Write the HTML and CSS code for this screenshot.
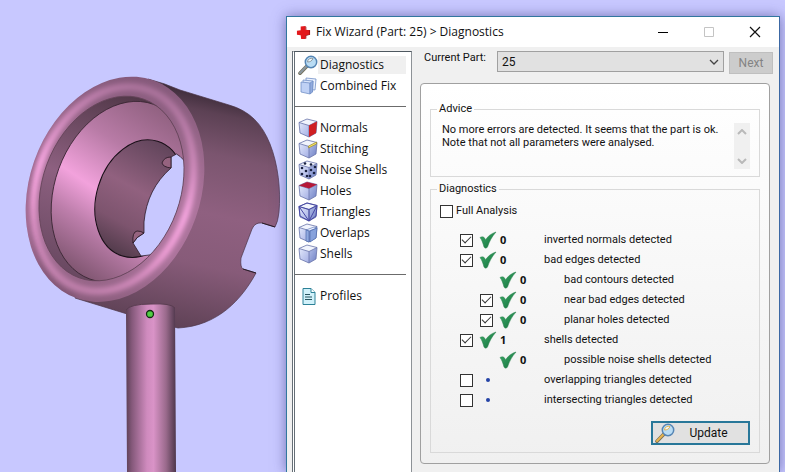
FILE: index.html
```html
<!DOCTYPE html>
<html lang="en">
<head>
<meta charset="utf-8">
<title>Fix Wizard (Part: 25) &gt; Diagnostics</title>
<link rel="stylesheet" href="styles.css">
</head>
<body>
<svg class="defs" aria-hidden="true">
  <defs>
    <linearGradient id="face-l" x1="0" y1="0" x2="1" y2="1"><stop offset="0" stop-color="#e2e8fb"/><stop offset="1" stop-color="#a3aee4"/></linearGradient>
    <linearGradient id="face-r" x1="0" y1="0" x2="1" y2="1"><stop offset="0" stop-color="#b3bfe9"/><stop offset="1" stop-color="#6f80c4"/></linearGradient>
    <linearGradient id="check-g" x1="0" y1="0" x2="1" y2="1"><stop offset="0" stop-color="#3fa96a"/><stop offset="1" stop-color="#11713a"/></linearGradient>
    <symbol id="cube" viewBox="0 0 20 20">
      <path d="M1 4.500 9 1l10 2.500-8 4z" fill="#f1f4fd"/>
      <path d="M1 4.500 11 7.500V19L2 15z" fill="url(#face-l)"/>
      <path d="M11 7.500 19 3.500 18 15l-7 4z" fill="url(#face-r)"/>
      <path d="M1 4.500 9 1l10 2.500L18 15l-7 4-9-4zM1 4.500l10 3 8-4M11 7.500V19" fill="none" stroke="#6772a8" stroke-width=".8" stroke-linejoin="round"/>
    </symbol>
    <symbol id="check" viewBox="0 0 18 18">
      <path d="M1 6.500c2.500-1.300 4.500-.8 5.500 2.500C8.500 5.500 12 2.500 17 1 13 5.500 10.500 10 8.500 16c-.8 1.500-2.800 1.500-3.500 0C4 12.500 3 9 1 6.500z" fill="url(#check-g)" stroke="#28814d" stroke-width=".5"/>
    </symbol>
    <symbol id="lens" viewBox="0 0 20 20">
      <path d="M2 18.300 9 11" stroke="#75715c" stroke-width="3.600" stroke-linecap="round"/>
      <path d="M2 18 9 10.800" class="handle" stroke-width="2" stroke-linecap="round"/>
      <circle cx="13" cy="7" r="5.700" fill="#b9dcf4" stroke="#5585b4" stroke-width="1.500"/>
      <path d="M9.500 7A4 4 0 0 1 15 3.500C14 6 12 7 9.500 7z" fill="#eff9ff"/>
    </symbol>
  </defs>
</svg>

<div class="desktop">
  <svg class="scene" viewBox="0 0 286 472" preserveAspectRatio="xMinYMin meet" role="img" aria-label="3D view of the part">
    <defs>
      <linearGradient id="body-g" gradientUnits="userSpaceOnUse" x1="215" y1="94" x2="165" y2="325">
        <stop offset="0" stop-color="#3c2b39"/><stop offset=".08" stop-color="#5c4154"/><stop offset=".25" stop-color="#7b556f"/><stop offset=".5" stop-color="#8f6080"/><stop offset=".72" stop-color="#875b79"/><stop offset="1" stop-color="#5f4256"/>
      </linearGradient>
      <linearGradient id="ring-g" gradientUnits="userSpaceOnUse" x1="140" y1="76" x2="95" y2="302">
        <stop offset="0" stop-color="#85597a"/><stop offset=".25" stop-color="#98678a"/><stop offset=".5" stop-color="#ac749c"/><stop offset=".75" stop-color="#ac749c"/><stop offset="1" stop-color="#8c5e7e"/>
      </linearGradient>
      <linearGradient id="shine-g" gradientUnits="userSpaceOnUse" x1="120" y1="78" x2="115" y2="300">
        <stop offset="0" stop-color="#a87199"/><stop offset=".28" stop-color="#d18bbd"/><stop offset=".5" stop-color="#f9a8e3"/><stop offset=".68" stop-color="#f09fd7"/><stop offset=".84" stop-color="#d38bbd"/><stop offset="1" stop-color="#bd7ea9"/>
      </linearGradient>
      <linearGradient id="cone-g" gradientUnits="userSpaceOnUse" x1="140" y1="100" x2="95" y2="280">
        <stop offset="0" stop-color="#8f607f"/><stop offset=".3" stop-color="#b87ba6"/><stop offset=".57" stop-color="#f2a2dc"/><stop offset=".75" stop-color="#bd7eab"/><stop offset="1" stop-color="#805671"/>
      </linearGradient>
      <linearGradient id="bore-g" gradientUnits="userSpaceOnUse" x1="155" y1="140" x2="130" y2="258">
        <stop offset="0" stop-color="#60445a"/><stop offset=".45" stop-color="#91617f"/><stop offset=".75" stop-color="#7d546e"/><stop offset="1" stop-color="#523b4b"/>
      </linearGradient>
      <linearGradient id="wall-g" gradientUnits="userSpaceOnUse" x1="140" y1="95" x2="80" y2="280">
        <stop offset="0" stop-color="#503747"/><stop offset=".5" stop-color="#8d6080"/><stop offset="1" stop-color="#684860"/>
      </linearGradient>
      <linearGradient id="stem-g">
        <stop offset="0" stop-color="#5c4055"/><stop offset=".12" stop-color="#85597b"/><stop offset=".42" stop-color="#cf8bbe"/><stop offset=".55" stop-color="#d993c7"/><stop offset=".8" stop-color="#9a6a8c"/><stop offset="1" stop-color="#4d364a"/>
      </linearGradient>
      <filter id="soft" x="-20%" y="-20%" width="140%" height="140%"><feGaussianBlur stdDeviation="2.500"/></filter>
      <clipPath id="opening"><ellipse cx="111.500" cy="188.500" rx="69" ry="95" transform="rotate(20 111.500 188.500)"/></clipPath>
      <clipPath id="rim"><ellipse cx="115" cy="189.300" rx="85.600" ry="115.500" transform="rotate(19.300 115 189.300)"/></clipPath>
    </defs>
    <path d="M148 79Q164 83 180 90L229 105C250 111 262 124 270 144C278 164 281 190 279 212Q278 222 275 227L262 223Q255 222 252 229L241 258Q240 267 243 269L256 273C242 299 218 326 178 328L150 321L75 298z" fill="url(#body-g)" stroke="#4a3446" stroke-width=".7"/>
    <path d="m243 269 13 4M262 223l13 4" stroke="#281b27"/>
    <g clip-path="url(#rim)">
      <path d="M20 70h195v240H20z" fill="url(#ring-g)"/>
      <ellipse cx="113" cy="189" rx="77" ry="105" transform="rotate(19.500 113 189)" fill="none" stroke="url(#shine-g)" stroke-width="7" filter="url(#soft)"/>
      <path d="M49 119C30 152 24 195 30 232C38 272 57 291 75 298" fill="none" stroke="#59394f" stroke-width="3" opacity=".45" filter="url(#soft)"/>
    </g>
    <g clip-path="url(#opening)">
      <path d="M30 80h170v220H30z" fill="url(#wall-g)"/>
      <ellipse cx="121.700" cy="191.700" rx="67" ry="93" transform="rotate(20 121.700 191.700)" fill="url(#cone-g)" stroke="#382532" stroke-width=".8"/>
      <ellipse cx="140" cy="198.700" rx="43.500" ry="60" transform="rotate(17 140 198.700)" fill="url(#bore-g)" stroke="#170e16"/>
      <path d="M176.500 154Q184 158 190 170V230L156 252Q150 256 141 256L133 243Q136 237 144 233V222C146 200 155 182 171 168V157z" fill="#c8c8ff" stroke="#2d1d2a" stroke-width=".8"/>
      <path d="M171 157Q164 157 162 163Q163 167 171 168z" fill="#96637f" stroke="#23151f" stroke-width=".8"/>
      <path d="M133 243Q132 232 137 231Q141 231 144 233Q136 237 133 243z" fill="#96637f" stroke="#23151f" stroke-width=".8"/>
    </g>
    <ellipse cx="111.500" cy="188.500" rx="69" ry="95" transform="rotate(20 111.500 188.500)" fill="none" stroke="#644459" stroke-width=".8"/>
    <path d="M126 310Q130 304 151 304Q171 303 175 308L176 472H127z" fill="url(#stem-g)"/>
    <path d="M126 310Q130 304 151 304Q171 303 175 308" fill="none" stroke="#5a3d51"/>
    <circle cx="150" cy="314" r="3.500" fill="#4fce43" stroke="#102b10" stroke-width="1.300"/>
  </svg>

  <main class="window">
    <header class="titlebar">
      <svg class="app-icon" viewBox="0 0 16 16" aria-hidden="true"><path d="M5 1.500 10 1v4l5 .5-.5 5-4 .5-.5 4H5.500L5 11l-4-.5V6l4-.5z" fill="#e3191c"/><path d="m10 1 1 1v3.500l4 0v5l-4 1v3l-1 .5v-4l4-1V6l-4-1z" fill="#9c080b"/></svg>
      <h1>Fix Wizard (Part: 25) &gt; Diagnostics</h1>
      <button class="win-btn" aria-label="Minimize"><svg viewBox="0 0 12 12"><path d="M1 6.500h10" stroke="#000"/></svg></button>
      <button class="win-btn" aria-label="Maximize" disabled><svg viewBox="0 0 12 12"><path d="M1.500 1.500h9v9h-9z" fill="none" stroke="#c4c4c4"/></svg></button>
      <button class="win-btn" aria-label="Close"><svg viewBox="0 0 12 12"><path d="m1 1 10 10M11 1 1 11" stroke="#111" stroke-width="1.200"/></svg></button>
    </header>
    <div class="client">
      <nav class="sidebar" aria-label="Pages">
        <a class="item current" href="#diagnostics"><svg class="blue"><use href="#lens"/></svg><span>Diagnostics</span></a>
        <a class="item" href="#combined"><svg viewBox="0 0 20 20"><g stroke="#7290c6" stroke-width=".8"><path d="m8 2 10 1-1 11-9-1z" fill="#eaf1fe"/><path d="m5 4 10 1-.5 11L5 15z" fill="#d8e4fb"/><path d="m3 6 9 1v11l-9-2z" fill="#bfd1f5"/><path d="m12 7 3-2-.5 11-2.500 2z" fill="#91abde"/></g></svg><span>Combined Fix</span></a>
        <hr>
        <a class="item" href="#normals"><svg viewBox="0 0 20 20"><use href="#cube"/><path d="m11 7.500 8-4L18 15l-7 4z" fill="#cf1f23"/></svg><span>Normals</span></a>
        <a class="item" href="#stitching"><svg viewBox="0 0 20 20"><use href="#cube"/><path d="M10.500 9V7l8-4v2z" fill="#f4e25d" stroke="#92802b" stroke-width=".6"/></svg><span>Stitching</span></a>
        <a class="item" href="#noise"><svg viewBox="0 0 20 20"><use href="#cube"/><g fill="#182040"><circle cx="7" cy="3.500" r="1.300"/><circle cx="13" cy="4.500" r="1.300"/><circle cx="4" cy="8" r="1.300"/><circle cx="8" cy="11" r="1.300"/><circle cx="4" cy="14" r="1.300"/><circle cx="9" cy="16" r="1.300"/><circle cx="13" cy="10" r="1.300"/><circle cx="17" cy="7" r="1.300"/><circle cx="16" cy="13" r="1.300"/><circle cx="12" cy="16" r="1.300"/></g></svg><span>Noise Shells</span></a>
        <a class="item" href="#holes"><svg viewBox="0 0 20 20"><use href="#cube"/><path d="M1 4.500 9 1l10 2.500-8 4z" fill="#b51838"/></svg><span>Holes</span></a>
        <a class="item" href="#triangles"><svg viewBox="0 0 20 20"><use href="#cube"/><path d="M1 4.500 9 1l10 2.500L18 14l-7 5-9-5zM1 4.500l10 3 8-4M11 7.500V19M1 4.500 11 19l8-15.500" fill="none" stroke="#4748a4"/></svg><span>Triangles</span></a>
        <a class="item" href="#overlaps"><svg viewBox="0 0 20 20"><use href="#cube"/><path d="m8 7 8-3 3 1-8 3z" fill="#edf2ff" stroke="#657ebc" stroke-width=".7"/><path d="m8 7 3 1v11l-3-1z" fill="#91a9df" stroke="#4e6cae" stroke-width=".7"/><path d="m12 8 7-3-1 10-6 4z" fill="#86a1dc" stroke="#4e6cae" stroke-width=".7"/></svg><span>Overlaps</span></a>
        <a class="item" href="#shells"><svg><use href="#cube"/></svg><span>Shells</span></a>
        <hr>
        <a class="item" href="#profiles"><svg viewBox="0 0 20 20"><path d="M5 2.500h8l4 4v12H5z" fill="#d1f1fa" stroke="#2c8197"/><path d="M13 2.500v4h4" fill="#fff" stroke="#2c8197"/><path d="M7 8.500h5M7 11h7M7 13.500h7" stroke="#27545f"/></svg><span>Profiles</span></a>
      </nav>

      <div class="content">
        <div class="part-row">
          <label for="part">Current Part:</label>
          <select id="part"><option>25</option></select>
          <button class="next" disabled>Next</button>
        </div>
        <section class="panel" id="diagnostics">
          <fieldset class="advice">
            <legend>Advice</legend>
            <p>No more errors are detected. It seems that the part is ok.<br>Note that not all parameters were analysed.</p>
            <div class="scroller">
              <button aria-label="Scroll up" disabled><svg viewBox="0 0 10 6"><path d="m1 5 4-4 4 4"/></svg></button>
              <button aria-label="Scroll down" disabled><svg viewBox="0 0 10 6"><path d="m1 1 4 4 4-4"/></svg></button>
            </div>
          </fieldset>
          <fieldset class="results">
            <legend>Diagnostics</legend>
            <label class="full"><input type="checkbox"><span>Full Analysis</span></label>
            <div class="rows">
              <label class="row"><input type="checkbox" checked><svg><use href="#check"/></svg><b>0</b><span>inverted normals detected</span></label>
              <label class="row"><input type="checkbox" checked><svg><use href="#check"/></svg><b>0</b><span>bad edges detected</span></label>
              <div class="row sub"><i></i><svg><use href="#check"/></svg><b>0</b><span>bad contours detected</span></div>
              <label class="row sub"><input type="checkbox" checked><svg><use href="#check"/></svg><b>0</b><span>near bad edges detected</span></label>
              <label class="row sub"><input type="checkbox" checked><svg><use href="#check"/></svg><b>0</b><span>planar holes detected</span></label>
              <label class="row"><input type="checkbox" checked><svg><use href="#check"/></svg><b>1</b><span>shells detected</span></label>
              <div class="row sub"><i></i><svg><use href="#check"/></svg><b>0</b><span>possible noise shells detected</span></div>
              <label class="row"><input type="checkbox"><svg viewBox="0 0 18 18"><circle cx="9" cy="9" r="2" fill="#2443a6"/></svg><b></b><span>overlapping triangles detected</span></label>
              <label class="row"><input type="checkbox"><svg viewBox="0 0 18 18"><circle cx="9" cy="9" r="2" fill="#2443a6"/></svg><b></b><span>intersecting triangles detected</span></label>
            </div>
            <button class="update"><svg class="gold"><use href="#lens"/></svg><span>Update</span></button>
          </fieldset>
        </section>
      </div>
    </div>
  </main>
</div>
</body>
</html>
```

FILE: styles.css
```css
* { box-sizing: border-box; }

body {
  margin: 0;
  background: #c8c8ff;
  color: #111;
  font: 11px/14px Roboto, "Liberation Sans", sans-serif;
}

button, select, input { margin: 0; font: inherit; color: inherit; }
.defs { position: absolute; width: 0; height: 0; }

.desktop { display: flex; height: 100vh; overflow: hidden; }
.scene { flex: 0 0 286px; align-self: flex-start; }

.window {
  display: flex;
  flex-direction: column;
  flex: 1;
  margin: 16px 5px 0 0;
  border: 1px solid #31779f;
  border-right-color: #3c68a4;
  border-bottom: 0;
  background: #f0f0f0;
  box-shadow: 0 0 12px rgba(60, 60, 130, 0.6);
}

.titlebar { display: flex; align-items: center; height: 30px; background: #fff; padding: 0 1px 0 9px; }
.app-icon { width: 15px; height: 15px; }
.titlebar h1 { flex: 1; margin: 0 0 0 5px; font: 12px/16px "Open Sans", "Noto Sans", sans-serif; white-space: nowrap; }
.win-btn { display: grid; place-items: center; width: 46px; height: 28px; padding: 0; border: 0; background: none; }
.win-btn svg { width: 12px; height: 12px; }

.client { display: flex; flex: 1; gap: 8px; padding: 4px 6px 0 5px; }

.sidebar {
  flex: 0 0 120px;
  padding: 2px 5px 0 0;
  border: 1px solid #4e5860;
  border-right-color: #8d9297;
  border-bottom: 0;
  border-left: 3px double #656e76;
  background: #fff;
  font: 12px/18px "Open Sans", "Noto Sans", sans-serif;
}
.item { display: flex; align-items: center; height: 21px; padding-left: 3px; color: inherit; text-decoration: none; white-space: nowrap; }
.item svg { width: 20px; height: 20px; flex: none; }
.item span { flex: 1; padding-left: 2px; }
.current span { background: #f0f0f0; }
.blue { stroke: #8c98a0; }
.gold { stroke: #e9b44d; }
.sidebar hr { height: 1px; margin: 10px 0; border: 0; background: #6b6b6b; }

.content { flex: 1; min-width: 0; }
.part-row { display: flex; align-items: flex-start; gap: 5px; padding-left: 4px; }
.part-row label { width: 68px; white-space: nowrap; }
.part-row select {
  flex: 1;
  height: 21px;
  padding: 0 4px;
  border: 1px solid #a0a0a0;
  border-radius: 0;
  appearance: none;
  background: #e1e1e1 url("data:image/svg+xml,%3Csvg xmlns='http://www.w3.org/2000/svg' width='10' height='6'%3E%3Cpath d='m1 1 4 4 4-4' fill='none' stroke='%23444' stroke-width='1.3'/%3E%3C/svg%3E") no-repeat right 4px center;
  font-size: 12px;
}
.next { width: 44px; height: 22px; margin-top: 1px; padding: 0; border: 1px solid #bfbfbf; background: #ccc; color: #838383; font-size: 12px; }

.panel {
  margin-top: 9px;
  margin-right: 3px;
  padding: 18px 9px 10px;
  border: 1px solid #a0a0a0;
  border-radius: 4px;
  background: linear-gradient(#fff, #f0f0f0);
}
fieldset { display: flow-root; min-width: 0; margin: 0; padding: 0 9px; border: 1px solid #d9d9d9; }
legend { margin-left: -3px; padding: 0 2px; }
.advice { height: 75px; }
.results { height: 271px; margin-top: 5px; }
.advice p { float: left; margin: 7px 0 0 2px; line-height: 13px; }
.scroller { display: flex; flex-direction: column; justify-content: space-between; float: right; width: 16px; height: 46px; margin-top: 7px; background: #f0f0f0; }
.scroller button { display: grid; place-items: center; height: 17px; padding: 0; border: 0; background: none; }
.scroller svg { width: 10px; height: 6px; fill: none; stroke: #b9b9b9; stroke-width: 2; }

input[type="checkbox"] { display: grid; place-items: center; appearance: none; width: 13px; height: 13px; border: 1px solid #333; background: #fff; }
input[type="checkbox"]:checked::before { content: ""; width: 8px; height: 4px; margin-bottom: 3px; border: solid #333; border-width: 0 0 1px 1px; transform: rotate(-45deg); }

.full { display: flex; align-items: center; gap: 3px; height: 20px; margin-top: 5px; }
.rows { padding: 9px 0 0 20px; }
.row { display: grid; grid-template-columns: 19px 18px 44px 1fr; align-items: center; height: 20px; }
.row svg { width: 18px; height: 18px; }
.row b { padding-left: 3px; font: bold 11px/14px "Open Sans", "Noto Sans", sans-serif; }
.row span { padding-left: 3px; }
.sub { margin-left: 20px; }

.update { display: flex; align-items: center; width: 99px; height: 24px; margin: 11px 0 0 auto; padding: 0 2px; border: 2px solid #287799; background: #e1e1e1; }
.update svg { width: 20px; height: 20px; }
.update span { flex: 1; padding-right: 4px; font-size: 12px; }
```
